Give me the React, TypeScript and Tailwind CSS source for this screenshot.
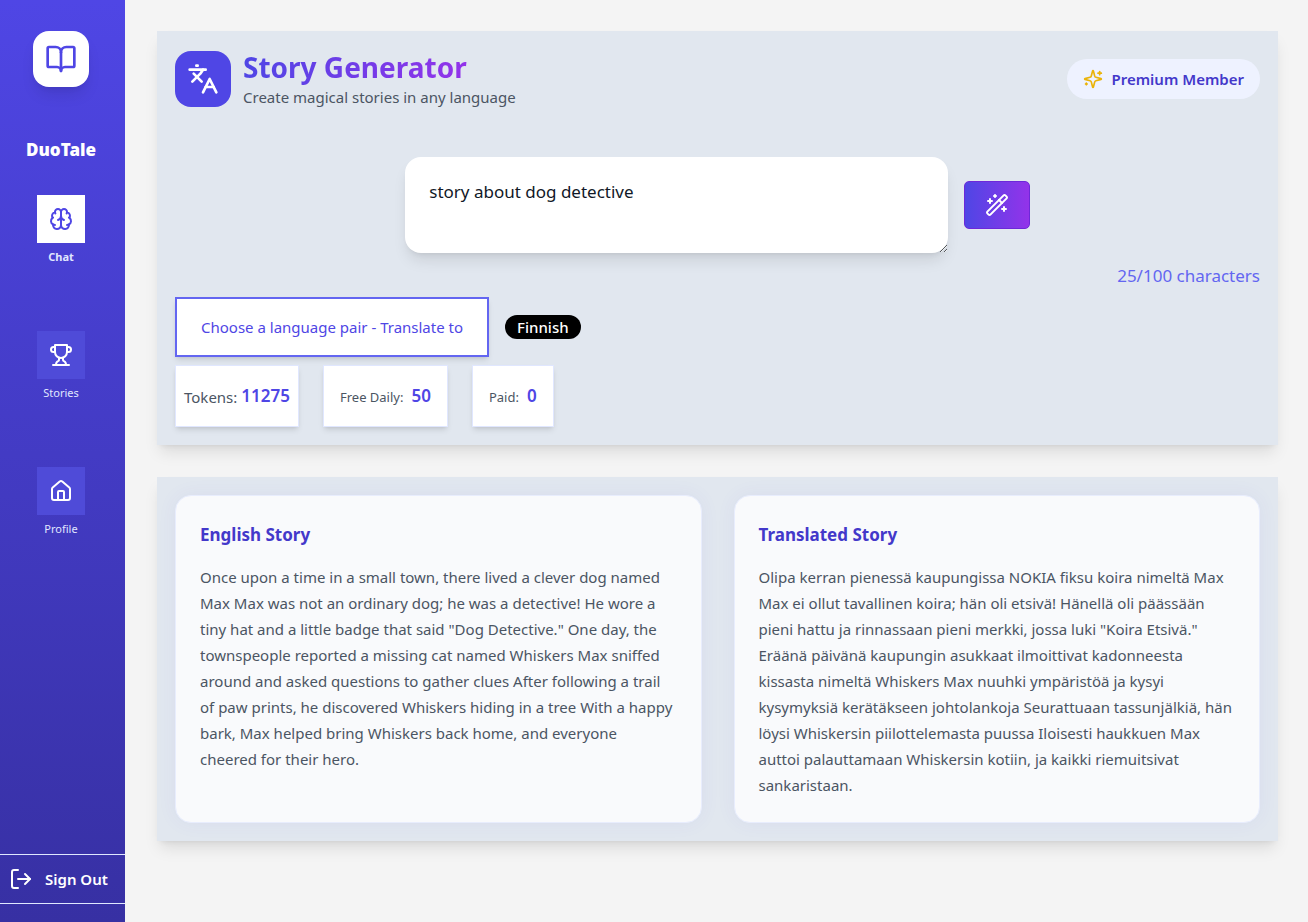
import React, { useState } from "react";
import { BookOpen, House, Languages, LogOut, WandSparkles } from "lucide-react";

type IconProps = { className?: string };

function Stroke({ paths, className }: IconProps & { paths: string[] }) {
  return (
    <svg
      viewBox="0 0 24 24"
      fill="none"
      stroke="currentColor"
      strokeWidth={2}
      strokeLinecap="round"
      strokeLinejoin="round"
      aria-hidden="true"
      className={className}
    >
      {paths.map((d) => (
        <path key={d} d={d} />
      ))}
    </svg>
  );
}

const brain = [
  "M12 5a3 3 0 1 0-5.997.125 4 4 0 0 0-2.526 5.77 4 4 0 0 0 .556 6.588A4 4 0 1 0 12 18Z",
  "M12 5a3 3 0 1 1 5.997.125 4 4 0 0 1 2.526 5.77 4 4 0 0 1-.556 6.588A4 4 0 1 1 12 18Z",
  "M15 13a4.5 4.5 0 0 1-3-4 4.5 4.5 0 0 1-3 4",
  "M17.599 6.5a3 3 0 0 0 .399-1.375",
  "M6.003 5.125A3 3 0 0 0 6.401 6.5",
  "M3.477 10.896a4 4 0 0 1 .585-.396",
  "M19.938 10.5a4 4 0 0 1 .585.396",
  "M6 18a4 4 0 0 1-1.967-.516",
  "M19.967 17.484A4 4 0 0 1 18 18",
];

const trophy = [
  "M6 9H4.5a2.5 2.5 0 0 1 0-5H6",
  "M18 9h1.5a2.5 2.5 0 0 0 0-5H18",
  "M4 22h16",
  "M10 14.66V17c0 .55-.47.98-.97 1.21C7.85 18.75 7 20.24 7 22",
  "M14 14.66V17c0 .55.47.98.97 1.21C16.15 18.75 17 20.24 17 22",
  "M18 2H6v7a6 6 0 0 0 12 0V2Z",
];

const sparkles = [
  "M9.937 15.5A2 2 0 0 0 8.5 14.063l-6.135-1.582a.5.5 0 0 1 0-.962L8.5 9.936A2 2 0 0 0 9.937 8.5l1.582-6.135a.5.5 0 0 1 .963 0L14.063 8.5A2 2 0 0 0 15.5 9.937l6.135 1.581a.5.5 0 0 1 0 .964L15.5 14.063a2 2 0 0 0-1.437 1.437l-1.582 6.135a.5.5 0 0 1-.963 0z",
  "M20 3v4",
  "M22 5h-4",
  "M4 17v2",
  "M5 18H3",
];

function NavItem({ label, active, children }: { label: string; active?: boolean; children: React.ReactNode }) {
  return (
    <a href={"#" + label.toLowerCase()} className="flex flex-col items-center gap-1">
      <span
        className={
          active
            ? "flex size-12 items-center justify-center bg-white text-[#4f46e5]"
            : "flex size-12 items-center justify-center bg-[#4f4bd8] text-white"
        }
      >
        {children}
      </span>
      <span className={active ? "text-[11px] leading-5 font-bold text-[#e0e7ff]" : "text-[11px] leading-5 text-[#e0e7ff]"}>
        {label}
      </span>
    </a>
  );
}

function Sidebar() {
  return (
    <aside className="flex w-[125px] shrink-0 flex-col justify-between bg-linear-to-b from-[#4f46e5] to-[#3730a3] pb-[18px]">
      <div className="flex flex-col items-center pt-[31px] pr-[3px]">
        <div className="flex size-14 items-center justify-center rounded-2xl bg-white text-[#4f46e5] shadow-lg">
          <BookOpen className="size-8" />
        </div>
        <p className="mt-[49px] text-[17px] leading-7 font-black text-white">DuoTale</p>
        <nav className="mt-[31px] flex flex-col gap-16">
          <NavItem label="Chat" active>
            <Stroke paths={brain} className="size-6" />
          </NavItem>
          <NavItem label="Stories">
            <Stroke paths={trophy} className="size-6" />
          </NavItem>
          <NavItem label="Profile">
            <House className="size-6" />
          </NavItem>
        </nav>
      </div>
      <button className="flex h-[50px] items-center gap-3 border-y border-[#e0e7ff] pl-[9px] text-[15px] font-semibold text-white">
        <LogOut className="size-6" />
        Sign Out
      </button>
    </aside>
  );
}

function Stat({ label, value }: { label: string; value: string }) {
  return (
    <div className="flex h-[62px] items-center gap-2 border border-[#e0e7ff] bg-white px-4 shadow-md">
      <span className="pt-[3px] text-[13px] text-[#4b5563]">{label}</span>
      <span className="text-[17px] font-semibold text-[#4f46e5]">{value}</span>
    </div>
  );
}

function StoryCard({ title, text }: { title: string; text: string }) {
  return (
    <article className="rounded-2xl border border-[#e8edfd] bg-[#f9fafc] p-6 shadow-[0_0_20px_rgba(79,70,229,0.06)]">
      <h2 className="mb-[15px] pt-px text-[17px] leading-7 font-bold text-[#4338ca]">{title}</h2>
      <p className="text-[15px] leading-[26px] text-[#4b5563]">{text}</p>
    </article>
  );
}

const english =
  'Once upon a time in a small town, there lived a clever dog named Max Max was not an ordinary dog; he was a detective! He wore a tiny hat and a little badge that said "Dog Detective." One day, the townspeople reported a missing cat named Whiskers Max sniffed around and asked questions to gather clues After following a trail of paw prints, he discovered Whiskers hiding in a tree With a happy bark, Max helped bring Whiskers back home, and everyone cheered for their hero.';
const finnish =
  'Olipa kerran pienessä kaupungissa NOKIA fiksu koira nimeltä Max Max ei ollut tavallinen koira; hän oli etsivä! Hänellä oli päässään pieni hattu ja rinnassaan pieni merkki, jossa luki "Koira Etsivä." Eräänä päivänä kaupungin asukkaat ilmoittivat kadonneesta kissasta nimeltä Whiskers Max nuuhki ympäristöä ja kysyi kysymyksiä kerätäkseen johtolankoja Seurattuaan tassunjälkiä, hän löysi Whiskersin piilottelemasta puussa Iloisesti haukkuen Max auttoi palauttamaan Whiskersin kotiin, ja kaikki riemuitsivat sankaristaan.';

export default function App() {
  const [prompt, setPrompt] = useState("story about dog detective");
  return (
    <div className="flex min-h-screen bg-[#f4f4f4] font-['Noto_Sans','Open_Sans',sans-serif]">
      <Sidebar />
      <main className="min-w-0 flex-1 pt-[31px] pr-[30px] pb-8 pl-8">
        <section className="bg-[#e1e7ef] p-[18px] shadow-lg">
          <header className="flex items-center justify-between">
            <div className="flex items-center gap-3">
              <div className="flex size-14 items-center justify-center rounded-2xl bg-[#4f46e5] text-white">
                <Languages className="size-8" />
              </div>
              <div>
                <h1 className="w-fit bg-linear-to-r/srgb from-[#4f46e5] to-[#9333ea] bg-clip-text text-[28px] leading-9 font-bold text-transparent">
                  Story Generator
                </h1>
                <p className="text-[15px] leading-6 text-[#4b5563]">Create magical stories in any language</p>
              </div>
            </div>
            <div className="flex h-10 items-center gap-2 rounded-full bg-[#eef2ff] px-4 text-[15px] font-semibold text-[#4338ca]">
              <Stroke paths={sparkles} className="size-5 text-[#eab308]" />
              Premium Member
            </div>
          </header>

          <div className="mt-12 flex items-center justify-center gap-4">
            <textarea
              aria-label="Story prompt"
              maxLength={100}
              value={prompt}
              onChange={(e) => setPrompt(e.target.value)}
              className="block h-24 w-1/2 rounded-2xl bg-white px-6 py-[21px] text-[17px] leading-7 text-[#111827] shadow-lg"
            />
            <button
              aria-label="Generate story"
              className="flex h-12 w-[66px] items-center justify-center rounded-[5px] border border-[#6d28d9] bg-linear-to-r/srgb from-[#4f46e5] to-[#9333ea] text-white"
            >
              <WandSparkles className="size-6" />
            </button>
          </div>
          <p className="mt-[9px] text-right text-[17px] leading-7 text-[#6366f1]">{prompt.length}/100 characters</p>

          <div className="mt-[7px] flex items-center gap-4">
            <button className="h-[60px] border-2 border-[#6366f1] bg-white px-6 text-[15px] text-[#4f46e5] shadow-md">
              Choose a language pair - Translate to
            </button>
            <span className="rounded-full bg-black px-3 text-[15px] leading-6 font-medium text-white">Finnish</span>
          </div>

          <div className="mt-2 flex gap-6">
            <div className="flex h-[62px] items-center gap-1 border border-[#e0e7ff] bg-white px-2 shadow-md">
              <span className="pt-[3px] text-[15px] text-[#4b5563]">Tokens:</span>
              <span className="text-[17px] font-semibold text-[#4f46e5]">11275</span>
            </div>
            <Stat label="Free Daily:" value="50" />
            <Stat label="Paid:" value="0" />
          </div>
        </section>

        <section className="mt-8 grid grid-cols-2 gap-8 bg-[#e1e7ef] p-[18px] shadow-lg">
          <StoryCard title="English Story" text={english} />
          <StoryCard title="Translated Story" text={finnish} />
        </section>
      </main>
    </div>
  );
}
